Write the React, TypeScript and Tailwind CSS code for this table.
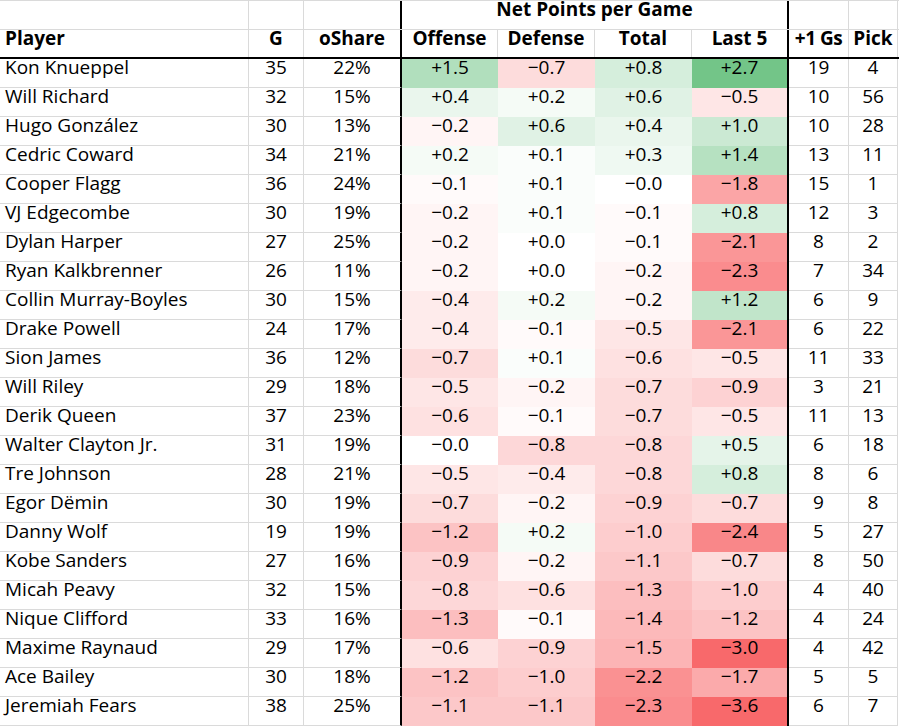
import React from "react";

type Row = [string, number, string, number, number, number, number, number, number];

const rows: Row[] = [
  ["Kon Knueppel", 35, "22%", 1.5, -0.7, 0.8, 2.7, 19, 4],
  ["Will Richard", 32, "15%", 0.4, 0.2, 0.6, -0.5, 10, 56],
  ["Hugo González", 30, "13%", -0.2, 0.6, 0.4, 1.0, 10, 28],
  ["Cedric Coward", 34, "21%", 0.2, 0.1, 0.3, 1.4, 13, 11],
  ["Cooper Flagg", 36, "24%", -0.1, 0.1, -0.0, -1.8, 15, 1],
  ["VJ Edgecombe", 30, "19%", -0.2, 0.1, -0.1, 0.8, 12, 3],
  ["Dylan Harper", 27, "25%", -0.2, 0.0, -0.1, -2.1, 8, 2],
  ["Ryan Kalkbrenner", 26, "11%", -0.2, 0.0, -0.2, -2.3, 7, 34],
  ["Collin Murray-Boyles", 30, "15%", -0.4, 0.2, -0.2, 1.2, 6, 9],
  ["Drake Powell", 24, "17%", -0.4, -0.1, -0.5, -2.1, 6, 22],
  ["Sion James", 36, "12%", -0.7, 0.1, -0.6, -0.5, 11, 33],
  ["Will Riley", 29, "18%", -0.5, -0.2, -0.7, -0.9, 3, 21],
  ["Derik Queen", 37, "23%", -0.6, -0.1, -0.7, -0.5, 11, 13],
  ["Walter Clayton Jr.", 31, "19%", -0.0, -0.8, -0.8, 0.5, 6, 18],
  ["Tre Johnson", 28, "21%", -0.5, -0.4, -0.8, 0.8, 8, 6],
  ["Egor Dëmin", 30, "19%", -0.7, -0.2, -0.9, -0.7, 9, 8],
  ["Danny Wolf", 19, "19%", -1.2, 0.2, -1.0, -2.4, 5, 27],
  ["Kobe Sanders", 27, "16%", -0.9, -0.2, -1.1, -0.7, 8, 50],
  ["Micah Peavy", 32, "15%", -0.8, -0.6, -1.3, -1.0, 4, 40],
  ["Nique Clifford", 33, "16%", -1.3, -0.1, -1.4, -1.2, 4, 24],
  ["Maxime Raynaud", 29, "17%", -0.6, -0.9, -1.5, -3.0, 4, 42],
  ["Ace Bailey", 30, "18%", -1.2, -1.0, -2.2, -1.7, 5, 5],
  ["Jeremiah Fears", 38, "25%", -1.1, -1.1, -2.3, -3.6, 6, 7],
];

function fmt(v: number): string {
  const neg = v < 0 || Object.is(v, -0);
  return (neg ? "\u2212" : "+") + Math.abs(v).toFixed(1);
}

function bg(v: number): string {
  if (v > 0) {
    const t = Math.min(v / 3, 1);
    return `rgb(${Math.round(255 - t * 156)}, ${Math.round(255 - t * 65)}, ${Math.round(255 - t * 132)})`;
  }
  const t = Math.min(-v / 3, 1);
  return `rgb(${Math.round(255 - t * 7)}, ${Math.round(255 - t * 150)}, ${Math.round(255 - t * 148)})`;
}

const txt = "leading-[16px]";

export default function App() {
  return (
    <div
      className="w-[899px] h-[726px] bg-white text-black text-[19px] overflow-hidden"
      style={{ fontFamily: "'Open Sans', Lato, sans-serif" }}
    >
      {/* Header row 1 */}
      <div className="flex h-[30px] border-t border-b border-[#dadada]">
        <div className="w-[249px] border-r border-[#dadada]" />
        <div className="w-[55px] border-r border-[#dadada]" />
        <div className="w-[98px] border-r-2 border-r-black" />
        <div className={`w-[387px] border-r-2 border-r-black text-center font-bold whitespace-nowrap ${txt}`}>
          Net Points per Game
        </div>
        <div className="w-[60px] border-r border-[#dadada]" />
        <div className="w-[49px] border-r border-[#dadada]" />
      </div>
      {/* Header row 2 */}
      <div className={`flex h-[29px] border-b-2 border-black font-bold whitespace-nowrap ${txt}`}>
        <div className="w-[249px] border-r border-[#dadada] pl-[5px]">Player</div>
        <div className="w-[55px] border-r border-[#dadada] text-center">G</div>
        <div className="w-[98px] border-r-2 border-r-black text-center">oShare</div>
        <div className="w-[96px] border-r border-[#dadada] text-center">Offense</div>
        <div className="w-[97px] border-r border-[#dadada] text-center">Defense</div>
        <div className="w-[97px] border-r border-[#dadada] text-center">Total</div>
        <div className="w-[97px] border-r-2 border-r-black text-center">Last 5</div>
        <div className="w-[60px] border-r border-[#dadada] text-center tracking-[-0.5px]">+1 Gs</div>
        <div className="w-[49px] border-r border-[#dadada] text-center">Pick</div>
      </div>
      {rows.map((r) => (
        <div key={r[0]} className={`flex h-[29px] whitespace-nowrap ${txt}`}>
          <div className="w-[249px] border-r border-b border-[#dadada] pl-[5px]">{r[0]}</div>
          <div className="w-[55px] border-r border-b border-[#dadada] text-center">{r[1]}</div>
          <div className="w-[98px] border-b border-b-[#dadada] border-r-2 border-r-black text-center">{r[2]}</div>
          <div className="w-[96px] text-center" style={{ backgroundColor: bg(r[3]) }}>{fmt(r[3])}</div>
          <div className="w-[97px] text-center" style={{ backgroundColor: bg(r[4]) }}>{fmt(r[4])}</div>
          <div className="w-[97px] text-center" style={{ backgroundColor: bg(r[5]) }}>{fmt(r[5])}</div>
          <div className="w-[97px] border-r-2 border-r-black text-center" style={{ backgroundColor: bg(r[6]) }}>{fmt(r[6])}</div>
          <div className="w-[60px] border-r border-b border-[#dadada] text-center">{r[7]}</div>
          <div className="w-[49px] border-r border-b border-[#dadada] text-center">{r[8]}</div>
        </div>
      ))}
    </div>
  );
}
